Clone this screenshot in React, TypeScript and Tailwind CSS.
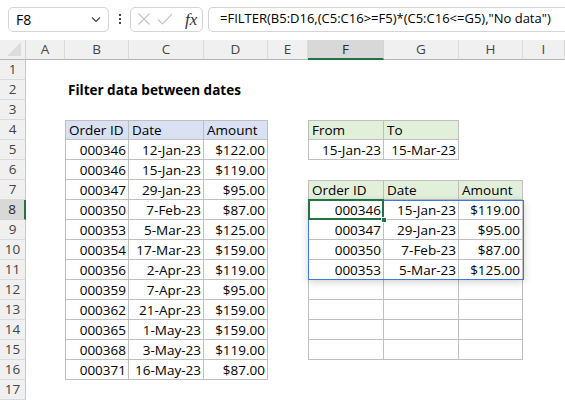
import React from 'react'

type Table = { r0: number; c0: number; head: string; data: string[][] }

const tables: Table[] = [
  {
    r0: 4,
    c0: 1,
    head: 'bg-[#d9e1f2]',
    data: [
      ['Order ID', 'Date', 'Amount'],
      ['000346', '12-Jan-23', '$122.00'],
      ['000346', '15-Jan-23', '$119.00'],
      ['000347', '29-Jan-23', '$95.00'],
      ['000350', '7-Feb-23', '$87.00'],
      ['000353', '5-Mar-23', '$125.00'],
      ['000354', '17-Mar-23', '$159.00'],
      ['000356', '2-Apr-23', '$119.00'],
      ['000359', '7-Apr-23', '$95.00'],
      ['000362', '21-Apr-23', '$159.00'],
      ['000365', '1-May-23', '$159.00'],
      ['000368', '3-May-23', '$119.00'],
      ['000371', '16-May-23', '$87.00'],
    ],
  },
  {
    r0: 4,
    c0: 5,
    head: 'bg-[#e2efda]',
    data: [
      ['From', 'To'],
      ['15-Jan-23', '15-Mar-23'],
    ],
  },
  {
    r0: 7,
    c0: 5,
    head: 'bg-[#e2efda]',
    data: [
      ['Order ID', 'Date', 'Amount'],
      ['000346', '15-Jan-23', '$119.00'],
      ['000347', '29-Jan-23', '$95.00'],
      ['000350', '7-Feb-23', '$87.00'],
      ['000353', '5-Mar-23', '$125.00'],
      ['', '', ''],
      ['', '', ''],
      ['', '', ''],
      ['', '', ''],
    ],
  },
]

const colLetters = ['A', 'B', 'C', 'D', 'E', 'F', 'G', 'H', 'I']
const rows = Array.from({ length: 17 }, (_, i) => i + 1)

function findCell(r: number, c: number) {
  for (const t of tables) {
    const dr = r - t.r0
    const dc = c - t.c0
    if (dr >= 0 && dr < t.data.length && dc >= 0 && dc < t.data[0].length) {
      return { t, dr, dc, text: t.data[dr][dc] }
    }
  }
  return null
}

function Cell({ r, c }: { r: number; c: number }) {
  const hit = findCell(r, c)
  const isActive = r === 8 && c === 5

  if (!hit) {
    return (
      <div className="relative h-5 px-[3px] flex items-center whitespace-nowrap">
        {r === 2 && c === 1 && <span className="font-bold text-[13.5px]">Filter data between dates</span>}
      </div>
    )
  }

  const { t, dr, dc, text } = hit
  let cls = 'relative h-5 pl-[3px] pr-[2px] pt-px flex items-center whitespace-nowrap border-[#bfbfbf] border-r border-b'
  if (dc === 0) cls += ' border-l'
  if (dr === 0) cls += ' border-t'
  cls += dr === 0 ? ` ${t.head} justify-start` : ' justify-end'

  return (
    <div className={cls}>
      {text}
      {isActive && (
        <>
          {/* spill range outline */}
          <div className="absolute -left-px top-0 w-[216px] h-[80px] border border-[#3c78d8] shadow-[0_2px_8px_rgba(0,0,0,0.18)] z-10 pointer-events-none" />
          <div className="absolute -left-px -top-px -right-px -bottom-px border-2 border-[#217346] z-20 pointer-events-none" />
          <div className="absolute -right-[4px] -bottom-[4px] w-[6px] h-[6px] bg-[#217346] border border-white z-30" />
        </>
      )}
    </div>
  )
}

export default function App() {
  return (
    <div
      className="w-[565px] h-[400px] overflow-hidden bg-white text-[13.5px] text-black"
      style={{ fontFamily: "'Open Sans', 'Noto Sans', sans-serif" }}
    >
      {/* formula bar */}
      <div className="h-10 flex items-center pl-2 pb-[2px] bg-white">
        <div className="shrink-0 w-[101px] h-[25px] rounded-[5px] border border-[#d4d4d4] flex items-center justify-between pl-[7px] pr-[6px] text-[14px]">
          <span>F8</span>
          <svg width="12" height="12" viewBox="0 0 12 12" fill="none" stroke="#444" strokeWidth="1.2">
            <path d="M2 4.5l4 4 4-4" />
          </svg>
        </div>
        <div className="shrink-0 w-[21px] flex flex-col items-center gap-[2px]">
          <span className="w-[2px] h-[2px] bg-[#444]" />
          <span className="w-[2px] h-[2px] bg-[#444]" />
          <span className="w-[2px] h-[2px] bg-[#444]" />
        </div>
        <div className="shrink-0 w-[73px] h-[25px] rounded-[5px] border border-[#d4d4d4] flex items-center pl-[6px] gap-[6px]">
          <svg width="14" height="14" viewBox="0 0 14 14" fill="none" stroke="#c4c4c4" strokeWidth="1.1">
            <path d="M1.5 1.5l11 11M12.5 1.5l-11 11" />
          </svg>
          <svg width="16" height="14" viewBox="0 0 16 14" fill="none" stroke="#c4c4c4" strokeWidth="1.1">
            <path d="M1 7.5l4.5 4.5L15 2" />
          </svg>
          <span
            className="ml-[6px] italic text-[17px] text-[#333] leading-none"
            style={{ fontFamily: "'Liberation Serif', 'DejaVu Serif', serif" }}
          >
            fx
          </span>
        </div>
        <div className="ml-[5px] min-w-0 flex-1 h-[25px] rounded-l-[5px] border border-r-0 border-[#d4d4d4] flex items-center pl-[11px] whitespace-nowrap overflow-hidden text-[13px]">
          =FILTER(B5:D16,(C5:C16&gt;=F5)*(C5:C16&lt;=G5),"No data")
        </div>
      </div>

      {/* sheet */}
      <div className="grid grid-cols-[26px_39px_64px_75px_64px_40px_76px_75px_64px_1fr]">
        {/* column headers */}
        <div className="h-5 bg-[#f0f0f0] border-b border-[#b4b4b4] border-r border-r-[#d4d4d4] flex items-end justify-end pr-[4px] pb-[3px]">
          <svg width="14" height="14" viewBox="0 0 14 14">
            <path d="M14 0L14 14L0 14Z" fill="#dcdcdc" />
          </svg>
        </div>
        {colLetters.map((l) => (
          <div
            key={l}
            className={
              l === 'F'
                ? 'h-5 bg-[#d8d8d8] border-b-2 border-[#217346] border-r border-r-[#d4d4d4] flex items-center justify-center text-[#2a2a2a]'
                : 'h-5 bg-[#f0f0f0] border-b border-[#b4b4b4] border-r border-r-[#dadada] flex items-center justify-center text-[#444]'
            }
          >
            {l}
          </div>
        ))}

        {rows.map((r) => (
          <React.Fragment key={r}>
            <div
              className={
                r === 8
                  ? 'h-5 bg-[#d8d8d8] border-r-2 border-[#217346] border-b border-b-[#d4d4d4] flex items-center justify-center text-[#2a2a2a]'
                  : 'h-5 bg-[#f0f0f0] border-r border-[#c8c8c8] border-b border-b-[#dadada] flex items-center justify-center text-[#444]'
              }
            >
              {r}
            </div>
            {colLetters.map((_, c) => (
              <Cell key={c} r={r} c={c} />
            ))}
          </React.Fragment>
        ))}
      </div>
    </div>
  )
}
